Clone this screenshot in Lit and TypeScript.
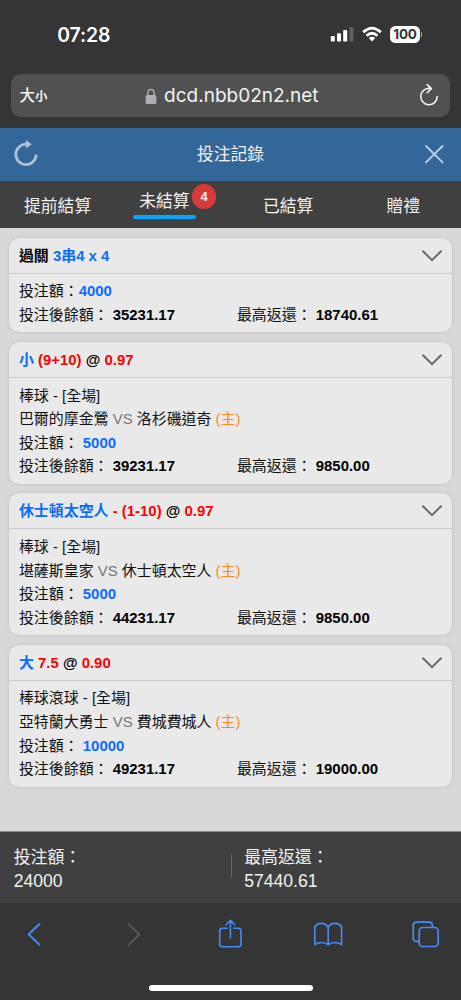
import { LitElement, html, css, svg, nothing } from "lit";
import { customElement, property } from "lit/decorators.js";

interface Part { text: string; tone: string; }
interface Bet {
  title: Part[];
  event?: string;
  away?: string;
  home?: string;
  stake: string;
  balance: string;
  payout: string;
}

const bets: Bet[] = [
  {
    title: [{ text: "過關 ", tone: "dark" }, { text: "3串4 x 4", tone: "blue" }],
    stake: "4000", balance: "35231.17", payout: "18740.61",
  },
  {
    title: [{ text: "小 ", tone: "blue" }, { text: "(9+10) ", tone: "red" }, { text: "@ ", tone: "dark" }, { text: "0.97", tone: "red" }],
    event: "棒球 - [全場]", away: "巴爾的摩金鶯", home: "洛杉磯道奇",
    stake: "5000", balance: "39231.17", payout: "9850.00",
  },
  {
    title: [{ text: "休士頓太空人 ", tone: "blue" }, { text: "- (1-10) ", tone: "red" }, { text: "@ ", tone: "dark" }, { text: "0.97", tone: "red" }],
    event: "棒球 - [全場]", away: "堪薩斯皇家", home: "休士頓太空人",
    stake: "5000", balance: "44231.17", payout: "9850.00",
  },
  {
    title: [{ text: "大 ", tone: "blue" }, { text: "7.5 ", tone: "red" }, { text: "@ ", tone: "dark" }, { text: "0.90", tone: "red" }],
    event: "棒球滾球 - [全場]", away: "亞特蘭大勇士", home: "費城費城人",
    stake: "10000", balance: "49231.17", payout: "19000.00",
  },
];

@customElement("bet-card")
class BetCard extends LitElement {
  @property({ attribute: false }) bet!: Bet;

  static styles = css`
    :host { display: block; background: #e9e9e9; border-radius: 10px; box-shadow: 0 0 3px rgba(0, 0, 0, 0.14); font-size: 14.95px; color: #111; }
    .head { display: flex; align-items: center; justify-content: space-between; height: 35px; padding: 0 9px 0 9.6px; border-bottom: 1px solid #cbcbcb; }
    .title { font-weight: 700; line-height: 36px; padding-top: 1px; white-space: pre; }
    .chevron { display: block; width: 22px; height: 14px; margin-top: 1px; }
    .body { padding: 5.8px 9.6px 5.8px; }
    .line { display: flex; height: 23.6px; line-height: 23.6px; white-space: pre; }
    .half { width: 218px; }
    .dark { color: #000; }
    .blue { color: #0a6cff; }
    .red { color: #ff0000; }
    .vs { color: #777; }
    .host { color: #ff8c1a; }
    b { color: #000; }
    b.blue { color: #0a6cff; }
  `;

  render() {
    const b = this.bet;
    return html`
      <div class="head">
        <div class="title">${b.title.map((p) => html`<span class=${p.tone}>${p.text}</span>`)}</div>
        <svg class="chevron" viewBox="0 0 22 14"><path d="M2 2.3 11 11.2 20 2.3" fill="none" stroke="#6a6a6a" stroke-width="2" stroke-linecap="round"/></svg>
      </div>
      <div class="body">
        ${b.event
          ? html`<div class="line">${b.event}</div>
              <div class="line"><span>${b.away} </span><span class="vs">VS</span><span> ${b.home} </span><span class="host">(主)</span></div>`
          : nothing}
        <div class="line"><span>投注額：${b.event ? " " : ""}</span><b class="blue">${b.stake}</b></div>
        <div class="line">
          <div class="half">投注後餘額： <b>${b.balance}</b></div><div>最高返還： <b>${b.payout}</b></div>
        </div>
      </div>`;
  }
}

const blueStroke = "#438df7";
const tools = [
  svg`<path d="M39.3 24.3 28.7 34.3 39.3 44.6" fill="none" stroke=${blueStroke} stroke-width="2" stroke-linecap="round" stroke-linejoin="round"/>`,
  svg`<path d="M128.7 24.3 139.4 34.3 128.7 44.6" fill="none" stroke="#5b5b5b" stroke-width="1.8" stroke-linecap="round" stroke-linejoin="round"/>`,
  svg`<path d="M226.8 28.2H222.5Q219.7 28.2 219.7 31V44Q219.7 46.8 222.5 46.8H238.2Q241 46.8 241 44V31Q241 28.2 238.2 28.2H233.8M230.4 38V20.5M226 24.8 230.4 20.4 234.8 24.8" fill="none" stroke=${blueStroke} stroke-width="1.6" stroke-linecap="round" stroke-linejoin="round"/>`,
  svg`<path d="M328.2 27.2C325.5 22.3 318 22.2 314.8 26.6V44.6C318.3 41.8 325 41.6 328.2 44.8C331.4 41.6 338 41.8 341.6 44.6V26.6C338.4 22.2 330.9 22.3 328.2 27.2ZM328.2 27.2V44.8" fill="none" stroke=${blueStroke} stroke-width="1.6" stroke-linejoin="round"/>`,
  svg`<path d="M418.6 41.3H416.6Q413.2 41.3 413.2 37.9V25.5Q413.2 22.1 416.6 22.1H429Q432.4 22.1 432.4 25.5V27.2" fill="none" stroke=${blueStroke} stroke-width="1.7"/><rect x="419.2" y="27.5" width="19" height="19" rx="3.6" fill="none" stroke=${blueStroke} stroke-width="1.7"/>`,
];
const toolBoxes = ["24 14 20 40", "124 14 20 40", "215 14 30 40", "313 14 30 40", "411 14 30 40"];

@customElement("app-root")
class AppRoot extends LitElement {
  static styles = css`
    :host { display: flex; flex-direction: column; width: 461px; height: 1000px; overflow: hidden; background: #353535; color: #f2f2f2; font-family: "Liberation Sans", "Noto Sans CJK TC", sans-serif; }
    svg { display: block; flex: none; }
    .status { height: 74px; flex: none; display: flex; align-items: flex-start; justify-content: space-between; padding: 0 41px 0 57.2px; box-sizing: border-box; font-family: Inter, sans-serif; }
    .clock { font-size: 19.4px; font-weight: 600; line-height: 24px; padding-top: 23px; letter-spacing: -0.1px; color: #fff; }
    .signals { display: flex; padding-top: 26px; }
    .battery { position: relative; margin-left: 0.5px; width: 30px; height: 16.5px; border-radius: 5.5px; background: #fff; color: #353535; font-size: 13.5px; font-weight: 700; line-height: 16.5px; text-align: center; letter-spacing: -0.2px; }
    .nub { position: absolute; right: -2.4px; top: 6px; width: 1.6px; height: 5px; border-radius: 0 2px 2px 0; background: #aaa; }
    .address { height: 43px; flex: none; margin: 0 11px 11px; padding: 0 11px 0 8.6px; border-radius: 10px; background: #515151; display: grid; grid-template-columns: 60px 1fr 60px; align-items: center; }
    .size { font-size: 15.5px; font-weight: 500; line-height: 24px; padding-top: 1px; }
    .small { font-size: 12.5px; font-weight: 700; }
    .site { display: flex; align-items: center; justify-content: center; gap: 7.5px; padding-left: 4.6px; font-family: Inter, sans-serif; font-size: 19px; line-height: 24px; padding-top: 1px; }
    .reload { justify-self: end; margin-bottom: 2px; }
    .top { height: 53px; flex: none; background: #336699; display: grid; grid-template-columns: 60px 1fr 60px; align-items: center; padding: 0 16px 0 14px; font-size: 16.8px; line-height: 53px; text-align: center; }
    .name { padding-left: 2px; }
    .turn { margin-bottom: 4px; }
    .close { justify-self: end; margin-bottom: 1px; }
    .tabs { height: 47px; flex: none; background: #404040; display: grid; grid-template-columns: repeat(4, 115.25px); font-size: 16.8px; }
    .tab { position: relative; height: 47px; text-align: center; line-height: 51px; }
    .current { line-height: 42px; padding-right: 17px; }
    .current::after { content: ""; position: absolute; left: 18px; top: 34px; width: 63px; height: 4px; border-radius: 2px; background: #00a8ff; }
    .count { position: absolute; left: 76.5px; top: 3px; width: 24.6px; height: 24.6px; border-radius: 50%; background: #d83a3a; font-size: 13px; font-weight: 700; line-height: 25px; }
    .list { height: 604px; flex: none; box-sizing: border-box; background: #d8d8d8; padding: 9.7px 9.3px 0; display: flex; flex-direction: column; gap: 9.4px; border-bottom: 1px solid #8a8a8a; }
    .totals { height: 71px; flex: none; background: #404040; display: grid; grid-template-columns: 230.5px 1fr; font-size: 16.9px; line-height: 24px; box-sizing: border-box; padding-top: 14px; }
    .total { padding-left: 13.7px; }
    .total + .total { background: linear-gradient(#666, #666) 0 8px / 1px 24px no-repeat; }
    .label { height: 23px; }
    .sum { font-size: 17.6px; }
    .tools { height: 78px; flex: none; display: grid; grid-template-columns: 24px 20px 80px 20px 71px 30px 68px 30px 68px 30px; padding-top: 11px; box-sizing: border-box; }
    .tool { width: 100%; height: 40px; }
    .homebar { width: 164px; height: 6px; border-radius: 3px; background: #fff; margin: 3.6px 0 0 148.6px; }
  `;

  render() {
    return html`
      <div class="status">
        <div class="clock">07:28</div>
        <div class="signals">
          <svg width="24" height="17" viewBox="0 0 24 17"><g fill="#fff"><rect x="0.8" y="10" width="4" height="5.6" rx="1.2"/><rect x="7" y="7.2" width="4" height="8.4" rx="1.2"/><rect x="13.2" y="4" width="4" height="11.6" rx="1.2"/></g><rect x="19.4" y="1" width="4" height="14.6" rx="1.2" fill="#626262"/></svg>
          <svg width="36" height="17" viewBox="-8 0 36 17"><g fill="none" stroke="#fff" stroke-width="2.7"><path d="M1.2 6.2Q10 -2 18.8 6.2"/><path d="M4.6 9.7Q10 4.8 15.4 9.7"/></g><path d="M6.8 12Q10 9.4 13.2 12L10 15.4Z" fill="#fff"/></svg>
          <div class="battery">100<span class="nub"></span></div>
        </div>
      </div>
      <div class="address">
        <div class="size">大<span class="small">小</span></div>
        <div class="site">
          <svg width="12" height="17" viewBox="0 0 12 17"><rect x="0.6" y="7" width="10.8" height="9" rx="1.6" fill="#aeaeb4"/><path d="M2.9 7.5V4.6Q2.9 1.4 6 1.4T9.1 4.6V7.5" fill="none" stroke="#aeaeb4" stroke-width="1.4"/></svg>
          <span>dcd.nbb02n2.net</span>
        </div>
        <svg class="reload" width="20" height="24" viewBox="0 0 20 24"><path d="M11.5 5.5A8.2 8.2 0 1 0 18.2 13.6M8.2 1.6 12.4 5.6 8.2 9.8" fill="none" stroke="#f2f2f2" stroke-width="1.6" stroke-linecap="round" stroke-linejoin="round"/></svg>
      </div>
      <div class="top">
        <svg class="turn" width="24" height="28" viewBox="0 0 24 28"><path d="M12.4 5.2A10.2 10.2 0 1 0 22.2 15.6" fill="none" stroke="#adc2d7" stroke-width="2.7"/><path d="M11.8 1V9.6L17.8 5.3Z" fill="#adc2d7"/></svg>
        <div class="name">投注記錄</div>
        <svg class="close" width="22" height="22" viewBox="0 0 22 22"><path d="M3 3 19.6 19.4M19.6 3 3 19.4" fill="none" stroke="#bdcddd" stroke-width="2" stroke-linecap="round"/></svg>
      </div>
      <div class="tabs">
        <div class="tab">提前結算</div>
        <div class="tab current">未結算<span class="count">4</span></div>
        <div class="tab">已結算</div>
        <div class="tab">贈禮</div>
      </div>
      <div class="list">${bets.map((b) => html`<bet-card .bet=${b}></bet-card>`)}</div>
      <div class="totals">
        <div class="total"><div class="label">投注額：</div><div class="sum">24000</div></div>
        <div class="total"><div class="label">最高返還：</div><div class="sum">57440.61</div></div>
      </div>
      <div class="tools">
        ${tools.map((t, i) => html`<span></span><svg class="tool" viewBox=${toolBoxes[i]}>${t}</svg>`)}
      </div>
      <div class="homebar"></div>`;
  }
}
